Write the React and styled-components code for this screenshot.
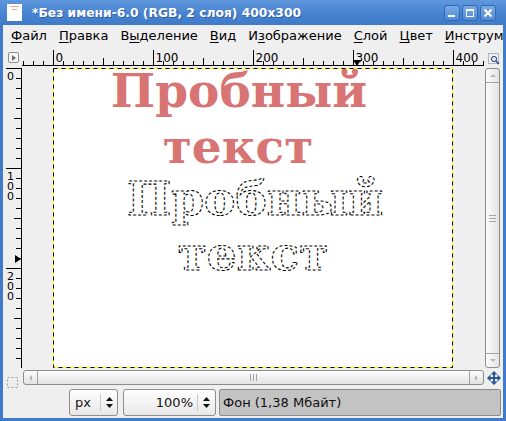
import React from 'react';
import styled, { createGlobalStyle } from 'styled-components';

const GlobalStyle = createGlobalStyle`
  html, body { margin: 0; padding: 0; background: #fff; }
  body { font-family: "DejaVu Sans", "Noto Sans", sans-serif; }
`;

const Window = styled.div`
  width: 506px;
  height: 421px;
  background: #3f7bc9;
  display: flex;
  flex-direction: column;
  overflow: hidden;
`;

const TitleBar = styled.div`
  height: 25px;
  flex: none;
  display: flex;
  align-items: center;
  padding: 0 10px 0 7px;
  background: linear-gradient(#5f97dc, #4682d0 60%, #3f7bc9);
  color: #fff;
`;

const TitleIcon = styled.div`
  width: 15px;
  height: 17px;
  background: #fff;
  display: flex;
  flex-direction: column;
  align-items: center;
  padding-top: 2px;
  box-sizing: border-box;
  gap: 2px;
`;

const IconLine = styled.div`
  width: ${p => p.w}px;
  height: 1px;
  background: #e9a5a5;
`;

const TitleText = styled.div`
  flex: 1;
  margin-left: 10px;
  font-size: 12.3px;
  font-weight: bold;
  white-space: nowrap;
  text-shadow: 1px 1px 0 rgba(20, 50, 100, 0.45);
`;

const WinButtons = styled.div`
  display: flex;
  gap: 2px;
`;

const WinButton = styled.div`
  width: 16px;
  height: 16px;
  box-sizing: border-box;
  border: 1px solid #3168b3;
  border-radius: 3px;
  background: linear-gradient(#78a9e6, #528bd5);
  display: flex;
  align-items: center;
  justify-content: center;
`;

const Frame = styled.div`
  flex: 1;
  margin: 0 3px 3px;
  background: #efefef;
  display: flex;
  flex-direction: column;
`;

const MenuBar = styled.div`
  height: 22px;
  flex: none;
  display: flex;
  padding-left: 2px;
  font-size: 13px;
  line-height: 22px;
  color: #000;
  white-space: nowrap;
  overflow: hidden;
`;

const MenuItem = styled.div`
  padding: 0 6px;
`;

const Mnemonic = styled.span`
  text-decoration: underline;
  text-underline-offset: 2px;
`;

const Workspace = styled.div`
  display: grid;
  grid-template-columns: 16px 462px 16px;
  grid-template-rows: 18px 300px 17px;
  margin-top: 3px;
  padding: 0 3px;
`;

const CornerButton = styled.div`
  width: 11px;
  height: 11px;
  margin: 2px 0 0 2px;
  box-sizing: border-box;
  border: 1px solid #8f8f8f;
  border-radius: 2px;
  background: #f6f6f6;
  display: flex;
  align-items: center;
  justify-content: center;
  &::after {
    content: '';
    border-top: 3px solid transparent;
    border-bottom: 3px solid transparent;
    border-left: 4px solid #6f6f6f;
    margin-left: 1px;
  }
`;

const ZoomCorner = styled.div`
  margin: 0 0 0 4px;
  width: 12px;
  height: 12px;
`;

const Ruler = styled.svg`
  display: block;
  font-family: "DejaVu Sans", sans-serif;
`;

const CanvasArea = styled.div`
  background: #efefef;
  display: flex;
  justify-content: center;
  overflow: hidden;
`;

const ImageBox = styled.div`
  width: 400px;
  height: 300px;
  background: #fff;
  flex: none;
`;

const ScrollV = styled.div`
  margin-left: 1px;
  width: 15px;
  height: 300px;
  box-sizing: border-box;
  border: 1px solid #8d8d8d;
  border-radius: 3px;
  background: linear-gradient(90deg, #fdfdfd, #e3e3e3);
  display: flex;
  flex-direction: column;
`;

const ScrollH = styled.div`
  margin: 2px 0 0 1px;
  width: 461px;
  height: 15px;
  box-sizing: border-box;
  border: 1px solid #8d8d8d;
  border-radius: 3px;
  background: linear-gradient(#fdfdfd, #e3e3e3);
  display: flex;
`;

const ScrollCap = styled.div`
  flex: none;
  ${p => p.vertical ? 'height: 13px;' : 'width: 13px;'}
  ${p => p.side}: 1px solid #a3a3a3;
  display: flex;
  align-items: center;
  justify-content: center;
`;

const Arrow = styled.div`
  width: 0;
  height: 0;
  ${p => p.dir === 'up' && 'border-left: 3px solid transparent; border-right: 3px solid transparent; border-bottom: 3px solid #b9b9b9;'}
  ${p => p.dir === 'down' && 'border-left: 3px solid transparent; border-right: 3px solid transparent; border-top: 3px solid #b9b9b9;'}
  ${p => p.dir === 'left' && 'border-top: 3px solid transparent; border-bottom: 3px solid transparent; border-right: 3px solid #b9b9b9;'}
  ${p => p.dir === 'right' && 'border-top: 3px solid transparent; border-bottom: 3px solid transparent; border-left: 3px solid #b9b9b9;'}
`;

const Thumb = styled.div`
  flex: 1;
  display: flex;
  flex-direction: ${p => p.vertical ? 'column' : 'row'};
  align-items: center;
  justify-content: center;
  gap: 2px;
`;

const GripLine = styled.div`
  background: #a4a4a4;
  ${p => p.vertical ? 'width: 7px; height: 1px;' : 'width: 1px; height: 7px;'}
`;

const QuickMask = styled.div`
  width: 11px;
  height: 11px;
  margin: 5px 0 0 1px;
`;

const NavButton = styled.div`
  margin: 2px 0 0 3px;
  width: 14px;
  height: 14px;
`;

const StatusRow = styled.div`
  display: flex;
  height: 27px;
  margin-top: 4px;
  padding: 0 2px 0 66px;
  font-size: 13px;
  color: #111;
`;

const Combo = styled.div`
  width: ${p => p.w}px;
  margin-right: ${p => p.gap}px;
  box-sizing: border-box;
  border: 1px solid #8e8e8e;
  border-radius: 3px;
  background: linear-gradient(#fefefe, #e8e8e8);
  display: flex;
  align-items: center;
`;

const ComboText = styled.div`
  width: ${p => p.w}px;
  box-sizing: border-box;
  padding: 0 4px 0 5px;
  text-align: ${p => p.align};
`;

const Spin = styled.div`
  flex: 1;
  height: 17px;
  border-left: 1px solid #c9c9c9;
  display: flex;
  align-items: center;
  justify-content: center;
`;

const StatusLabel = styled.div`
  flex: 1;
  box-sizing: border-box;
  border: 1px solid #8c8c8c;
  border-radius: 2px;
  background: #c3c3c3;
  padding-left: 3px;
  line-height: 25px;
  white-space: nowrap;
`;

function HRuler() {
  const ticks = [];
  const labels = [];
  for (let v = -30; v <= 430; v += 10) {
    const x = 31.5 + v;
    const h = v % 100 === 0 ? 16 : v % 50 === 0 ? 8 : 5;
    ticks.push(<line key={v} x1={x} x2={x} y1={16 - h} y2={16} />);
    if (v % 100 === 0 && v >= 0) {
      labels.push(<text key={'t' + v} x={x + 2} y={12}>{v}</text>);
    }
  }
  return (
    <Ruler width="462" height="18">
      <g stroke="#000" strokeWidth="1">
        <line x1="0" x2="462" y1="15.5" y2="15.5" />
        {ticks}
      </g>
      <g fontSize="12" fill="#000">{labels}</g>
      <polygon points="331,10 339,10 335,16" fill="#000" />
    </Ruler>
  );
}

function VRuler() {
  const ticks = [];
  const labels = [];
  for (let v = 0; v < 300; v += 10) {
    const y = v + 0.5;
    const h = v % 100 === 0 ? 16 : v % 50 === 0 ? 8 : 6;
    ticks.push(<line key={v} y1={y} y2={y} x1={16 - h} x2={16} />);
    if (v % 100 === 0) {
      String(v).split('').forEach((d, i) => {
        labels.push(<text key={v + '-' + i} x="1" y={v + 12 + i * 10}>{d}</text>);
      });
    }
  }
  return (
    <Ruler width="16" height="300">
      <g stroke="#000" strokeWidth="1">
        <line x1="15.5" x2="15.5" y1="0" y2="300" />
        {ticks}
      </g>
      <g fontSize="11" fill="#000">{labels}</g>
      <polygon points="9,187 15,191 9,195" fill="#000" />
    </Ruler>
  );
}

function SpinArrows() {
  return (
    <svg width="7" height="11" viewBox="0 0 7 11">
      <polygon points="0,4 7,4 3.5,0" fill="#111" />
      <polygon points="0,7 7,7 3.5,11" fill="#111" />
    </svg>
  );
}

function ImageContent() {
  return (
    <svg width="400" height="300" viewBox="0 0 400 300" style={{ display: 'block' }}>
      <g fontFamily="DejaVu Serif, serif" fontWeight="bold" fontSize="47" textAnchor="middle">
        <g fill="#d87474">
          <text x="186" y="39">Пробный</text>
          <text x="185" y="95">текст</text>
        </g>
        <g fill="none" stroke="#000" strokeWidth="1.1" strokeDasharray="3 2" shapeRendering="crispEdges">
          <text x="202" y="147">Пробный</text>
          <text x="200" y="202">текст</text>
        </g>
      </g>
      <rect x="0.5" y="0.5" width="399" height="299" fill="none" stroke="#ffff00" />
      <rect x="0.5" y="0.5" width="399" height="299" fill="none" stroke="#000" strokeDasharray="4 4" />
    </svg>
  );
}

export default function App() {
  return (
    <>
      <GlobalStyle />
      <Window>
        <TitleBar>
          <TitleIcon>
            <IconLine w={9} />
            <IconLine w={5} />
          </TitleIcon>
          <TitleText>*Без имени-6.0 (RGB, 2 слоя) 400x300</TitleText>
          <WinButtons>
            <WinButton>
              <svg width="10" height="10"><rect x="1" y="7" width="7" height="2" fill="#fff" /></svg>
            </WinButton>
            <WinButton>
              <svg width="10" height="10"><rect x="1.5" y="1.5" width="7" height="7" fill="none" stroke="#fff" /><rect x="1" y="1" width="8" height="2" fill="#fff" /></svg>
            </WinButton>
            <WinButton>
              <svg width="10" height="10"><path d="M1.5 1.5 L8.5 8.5 M8.5 1.5 L1.5 8.5" stroke="#fff" strokeWidth="2" /></svg>
            </WinButton>
          </WinButtons>
        </TitleBar>
        <Frame>
          <MenuBar>
            <MenuItem><Mnemonic>Ф</Mnemonic>айл</MenuItem>
            <MenuItem><Mnemonic>П</Mnemonic>равка</MenuItem>
            <MenuItem>В<Mnemonic>ы</Mnemonic>деление</MenuItem>
            <MenuItem><Mnemonic>В</Mnemonic>ид</MenuItem>
            <MenuItem>И<Mnemonic>з</Mnemonic>ображение</MenuItem>
            <MenuItem><Mnemonic>С</Mnemonic>лой</MenuItem>
            <MenuItem><Mnemonic>Ц</Mnemonic>вет</MenuItem>
            <MenuItem><Mnemonic>И</Mnemonic>нструменты</MenuItem>
          </MenuBar>
          <Workspace>
            <CornerButton />
            <HRuler />
            <ZoomCorner>
              <svg width="12" height="12" viewBox="0 0 12 12">
                <rect x="0.5" y="0.5" width="10" height="10" fill="none" stroke="#6d7f9a" strokeDasharray="1 1" />
                <circle cx="6" cy="6" r="2.6" fill="#dbe6f4" stroke="#2c4670" />
                <line x1="8" y1="8" x2="11" y2="11" stroke="#2c4670" strokeWidth="1.6" />
              </svg>
            </ZoomCorner>
            <VRuler />
            <CanvasArea>
              <ImageBox>
                <ImageContent />
              </ImageBox>
            </CanvasArea>
            <ScrollV>
              <ScrollCap vertical side="border-bottom"><Arrow dir="up" /></ScrollCap>
              <Thumb vertical>
                <GripLine vertical /><GripLine vertical /><GripLine vertical />
              </Thumb>
              <ScrollCap vertical side="border-top"><Arrow dir="down" /></ScrollCap>
            </ScrollV>
            <QuickMask>
              <svg width="11" height="11" viewBox="0 0 11 11">
                <rect x="0.5" y="0.5" width="10" height="10" fill="none" stroke="#9a9a9a" strokeDasharray="2 2" />
              </svg>
            </QuickMask>
            <ScrollH>
              <ScrollCap side="border-right"><Arrow dir="left" /></ScrollCap>
              <Thumb>
                <GripLine /><GripLine /><GripLine />
              </Thumb>
              <ScrollCap side="border-left"><Arrow dir="right" /></ScrollCap>
            </ScrollH>
            <NavButton>
              <svg width="14" height="14" viewBox="0 0 14 14">
                <path
                  d="M7 0 L10.5 3.5 L8 3.5 L8 6 L10.5 6 L10.5 3.5 L14 7 L10.5 10.5 L10.5 8 L8 8 L8 10.5 L10.5 10.5 L7 14 L3.5 10.5 L6 10.5 L6 8 L3.5 8 L3.5 10.5 L0 7 L3.5 3.5 L3.5 6 L6 6 L6 3.5 L3.5 3.5 Z"
                  fill="#2a5596"
                />
              </svg>
            </NavButton>
          </Workspace>
          <StatusRow>
            <Combo w={49} gap={5}>
              <ComboText w={30} align="left">px</ComboText>
              <Spin><SpinArrows /></Spin>
            </Combo>
            <Combo w={93} gap={3}>
              <ComboText w={73} align="right">100%</ComboText>
              <Spin><SpinArrows /></Spin>
            </Combo>
            <StatusLabel>Фон (1,38 Мбайт)</StatusLabel>
          </StatusRow>
        </Frame>
      </Window>
    </>
  );
}
